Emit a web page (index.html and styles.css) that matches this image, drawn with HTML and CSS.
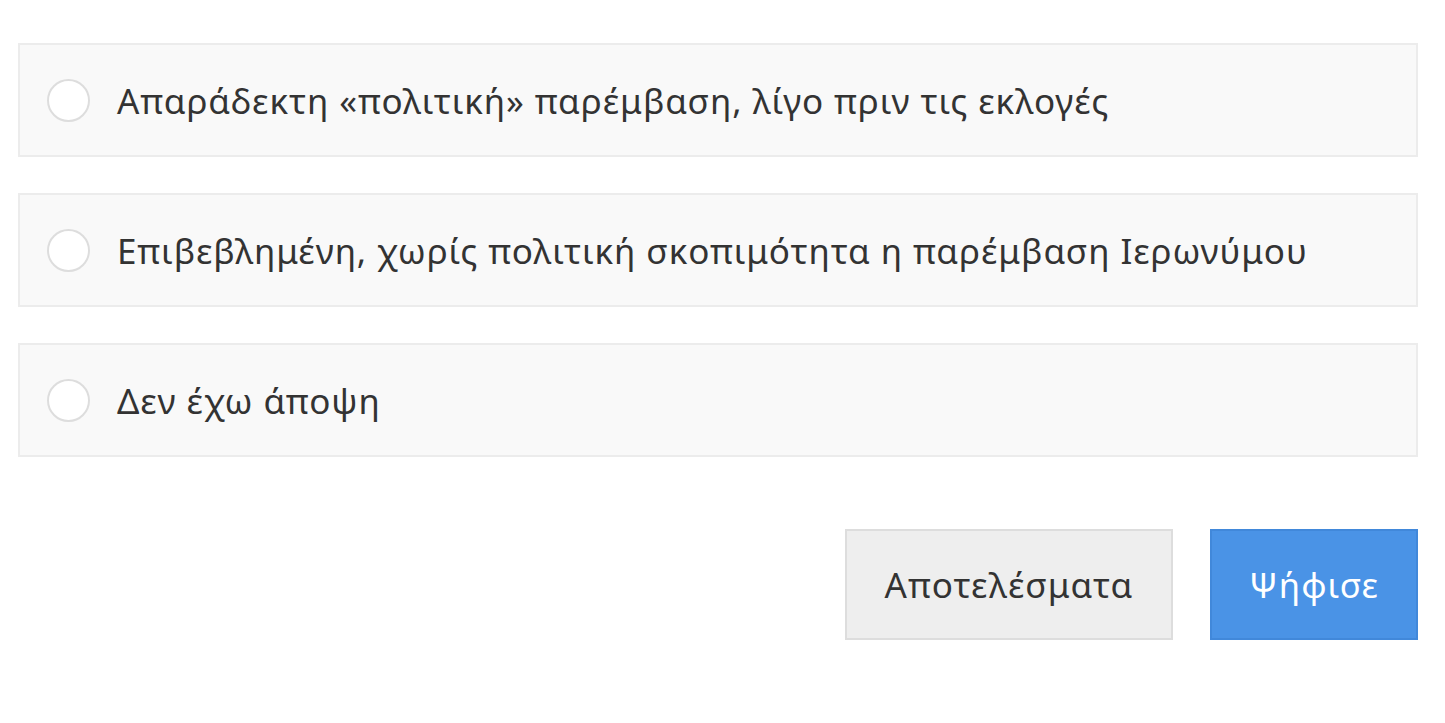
FILE: index.html
```html
<!DOCTYPE html>
<html>
<head>
    <title>Δημοσκόπηση</title>
    <link rel="stylesheet" href="styles.css">
</head>
<body>
    <div class="poll">
        <label class="option">
            <span class="radio"></span>
            <span class="option-text">Απαράδεκτη «πολιτική» παρέμβαση, λίγο πριν τις εκλογές</span>
        </label>
        <label class="option">
            <span class="radio"></span>
            <span class="option-text">Επιβεβλημένη, χωρίς πολιτική σκοπιμότητα η παρέμβαση Ιερωνύμου</span>
        </label>
        <label class="option">
            <span class="radio"></span>
            <span class="option-text">Δεν έχω άποψη</span>
        </label>
        <div class="actions">
            <button class="btn btn-results">Αποτελέσματα</button>
            <button class="btn btn-vote">Ψήφισε</button>
        </div>
    </div>
</body>
</html>
```

FILE: styles.css
```css
body {
    margin: 0;
    background: #fff;
    font-family: "Noto Sans", "Open Sans", sans-serif;
    color: #333;
}
.poll {
    padding: 43px 27px 0 18px;
    display: flex;
    flex-direction: column;
    gap: 36px;
}
.option {
    display: flex;
    align-items: center;
    height: 114px;
    box-sizing: border-box;
    padding-left: 27px;
    background: #f9f9f9;
    border: 2px solid #ececec;
    cursor: pointer;
}
.radio {
    width: 43px;
    height: 43px;
    box-sizing: border-box;
    border: 2px solid #ddd;
    border-radius: 50%;
    background: #fff;
    margin-right: 27px;
    flex-shrink: 0;
}
.option-text {
    font-size: 35px;
    letter-spacing: 0.9px;
    color: #333;
}
.actions {
    display: flex;
    justify-content: flex-end;
    gap: 37px;
    margin-top: 36px;
}
.btn {
    height: 111px;
    font-family: inherit;
    font-size: 35px;
    letter-spacing: 1.1px;
    cursor: pointer;
}
.btn-results {
    width: 328px;
    background: #eee;
    color: #333;
    border: 2px solid #ddd;
}
.btn-vote {
    width: 208px;
    background: #4a93e6;
    color: #fff;
    border: 2px solid #4188da;
}
```
